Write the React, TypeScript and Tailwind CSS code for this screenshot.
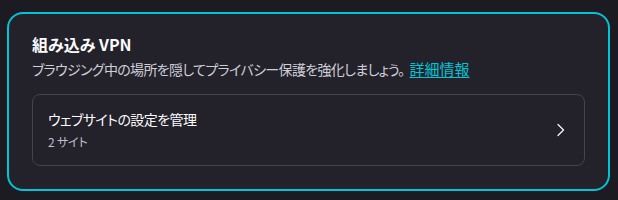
import React from 'react';

const jp = '"Noto Sans CJK JP", "Noto Sans", sans-serif';

export default function App() {
  return (
    <div
      className="w-[618px] h-[200px] bg-[#1c1b22] pt-[12px] pl-[7px] overflow-hidden"
      style={{ fontFamily: jp, fontFeatureSettings: '"palt"' }}
    >
      <section className="w-[603px] h-[179px] rounded-[16px] border-2 border-[#00c4d8] bg-[#23222b] px-[23px] pt-[19px]">
        <h2 className="text-[16px] leading-[22px] font-bold text-[#fbfbfe]">組み込み VPN</h2>
        <p className="mt-[3px] text-[14px] leading-[22px] tracking-[-0.65px] text-[#cfcfd8]">
          ブラウジング中の場所を隠してプライバシー保護を強化しましょう。
          <a href="#" className="ml-[5px] text-[#00c4d8] underline underline-offset-2 tracking-[0px] text-[15px]">
            詳細情報
          </a>
        </p>
        <button className="mt-[14px] w-full h-[72px] flex items-center justify-between rounded-[8px] border border-[#45444d] pl-[15px] pr-[18px] text-left">
          <div className="flex flex-col">
            <span className="text-[14px] leading-[20px] tracking-[-0.55px] text-[#fbfbfe]">ウェブサイトの設定を管理</span>
            <span className="mt-[4px] text-[12px] leading-[18px] tracking-[-0.2px] text-[#bfbfc9]">2 サイト</span>
          </div>
          <svg width="10" height="14" viewBox="0 0 10 14" fill="none" className="text-[#fbfbfe]">
            <path d="M2 1.5l5.5 5.5-5.5 5.5" stroke="currentColor" strokeWidth="1.2" strokeLinecap="round" strokeLinejoin="round" />
          </svg>
        </button>
      </section>
    </div>
  );
}
